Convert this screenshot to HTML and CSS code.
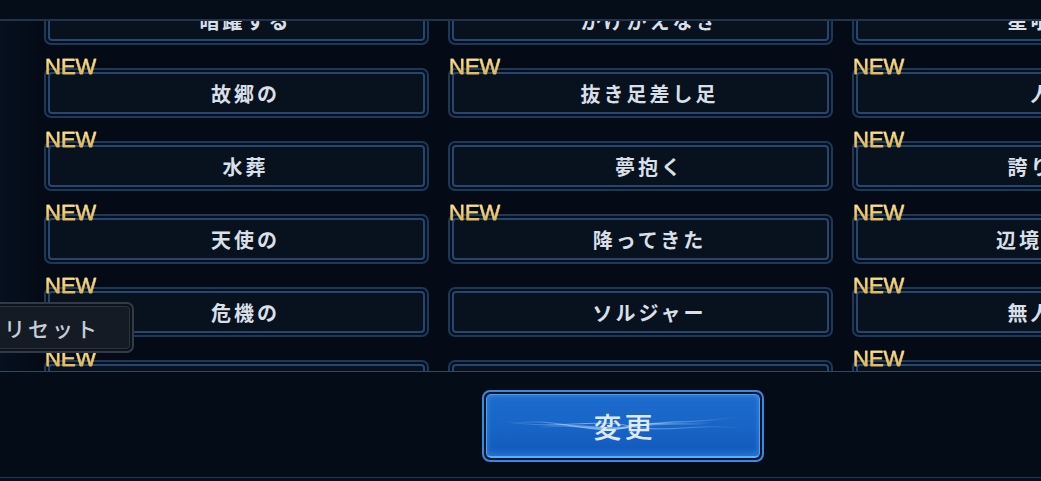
FILE: index.html
```html
<!DOCTYPE html>
<html lang="ja">
<head>
<meta charset="utf-8">
<title>称号変更</title>
<link rel="stylesheet" href="styles.css">
</head>
<body>
<div class="screen">
  <div class="header"></div>
  <div class="list">
    <div class="grid">
      <div class="cell"><div class="btn"><div class="btn-in">暗躍する</div></div></div>
      <div class="cell"><div class="btn"><div class="btn-in">かけがえなき</div></div></div>
      <div class="cell"><div class="btn"><div class="btn-in">星喰らう</div></div></div>

      <div class="cell"><span class="new">NEW</span><div class="btn"><div class="btn-in">故郷の</div></div></div>
      <div class="cell"><span class="new">NEW</span><div class="btn"><div class="btn-in">抜き足差し足</div></div></div>
      <div class="cell"><span class="new">NEW</span><div class="btn"><div class="btn-in">人形</div></div></div>

      <div class="cell"><span class="new">NEW</span><div class="btn"><div class="btn-in">水葬</div></div></div>
      <div class="cell"><div class="btn"><div class="btn-in">夢抱く</div></div></div>
      <div class="cell"><span class="new">NEW</span><div class="btn"><div class="btn-in">誇り高き</div></div></div>

      <div class="cell"><span class="new">NEW</span><div class="btn"><div class="btn-in">天使の</div></div></div>
      <div class="cell"><span class="new">NEW</span><div class="btn"><div class="btn-in">降ってきた</div></div></div>
      <div class="cell"><span class="new">NEW</span><div class="btn"><div class="btn-in">辺境の守護</div></div></div>

      <div class="cell"><span class="new">NEW</span><div class="btn"><div class="btn-in">危機の</div></div></div>
      <div class="cell"><div class="btn"><div class="btn-in">ソルジャー</div></div></div>
      <div class="cell"><span class="new">NEW</span><div class="btn"><div class="btn-in">無人の島</div></div></div>

      <div class="cell"><span class="new">NEW</span><div class="btn"><div class="btn-in">漂流する</div></div></div>
      <div class="cell"><div class="btn"><div class="btn-in">見習い</div></div></div>
      <div class="cell"><span class="new">NEW</span><div class="btn"><div class="btn-in">永遠の</div></div></div>
    </div>
    <div class="reset"><div class="reset-in">リセット</div></div>
  </div>
  <div class="footer">
    <div class="change">
      <div class="change-in">
        <svg class="swoosh" viewBox="0 0 272 62" preserveAspectRatio="none" aria-hidden="true">
          <defs>
            <linearGradient id="fade" x1="0" x2="1" y1="0" y2="0">
              <stop offset="0" stop-color="#cfe8ff" stop-opacity="0"/>
              <stop offset="0.35" stop-color="#cfe8ff" stop-opacity="0.55"/>
              <stop offset="0.6" stop-color="#cfe8ff" stop-opacity="0.5"/>
              <stop offset="1" stop-color="#cfe8ff" stop-opacity="0"/>
            </linearGradient>
          </defs>
          <path d="M20 30 C70 20 100 42 140 33 C180 24 210 30 250 22" fill="none" stroke="url(#fade)" stroke-width="1.2"/>
          <path d="M15 26 C60 36 110 24 140 31 C175 40 215 28 255 34" fill="none" stroke="url(#fade)" stroke-width="1"/>
          <path d="M50 33 C90 27 115 38 145 32 C170 27 195 31 225 28" fill="none" stroke="url(#fade)" stroke-width="2.2"/>
        </svg>
        <span class="change-label">変更</span>
      </div>
    </div>
  </div>
  <div class="strip"></div>
</div>
</body>
</html>
```

FILE: styles.css
```css
html, body {
  margin: 0;
  padding: 0;
}
body {
  width: 1041px;
  height: 481px;
  overflow: hidden;
  background: #040b16;
  font-family: "Noto Sans CJK JP", "Noto Sans", sans-serif;
}
.screen {
  display: flex;
  flex-direction: column;
  height: 481px;
}
.header {
  height: 19px;
  flex: none;
  background: #050d19;
  border-bottom: 2px solid #22344b;
  position: relative;
  z-index: 2;
}
.list {
  position: relative;
  height: 350px;
  flex: none;
  overflow: hidden;
  background: linear-gradient(90deg, #06101e 0, #040b16 40px, #040b16 100%);
}
.grid {
  display: grid;
  grid-template-columns: repeat(3, 385px);
  grid-auto-rows: 50px;
  column-gap: 19px;
  row-gap: 23px;
  margin-top: -26px;
  padding-left: 44px;
}
.cell {
  position: relative;
}
.btn {
  box-sizing: border-box;
  height: 50px;
  border: 2px solid #1e3858;
  border-radius: 7px;
  padding: 2px;
  background: #060f1c;
}
.btn-in {
  box-sizing: border-box;
  height: 100%;
  border: 2px solid #27466f;
  border-radius: 4px;
  background: #08121f;
  display: flex;
  align-items: center;
  justify-content: center;
  padding-left: 18px;
  color: #d9dfe7;
  font-size: 20px;
  font-weight: 700;
  letter-spacing: 3px;
  white-space: nowrap;
}
.new {
  position: absolute;
  left: 1px;
  top: -12px;
  z-index: 1;
  font-family: "Liberation Sans", Arial, sans-serif;
  font-size: 22px;
  line-height: 22px;
  -webkit-text-stroke: 0.4px #f0d27a;
  background: linear-gradient(180deg, #fdeeb0 0%, #efce70 50%, #cf9f3c 100%);
  -webkit-background-clip: text;
  background-clip: text;
  color: transparent;
}
.reset {
  position: absolute;
  left: -30px;
  top: 281px;
  box-sizing: border-box;
  width: 164px;
  height: 51px;
  border: 2px solid #323a46;
  border-radius: 7px;
  padding: 2px;
  background: #0d131b;
  z-index: 3;
}
.reset-in {
  box-sizing: border-box;
  height: 100%;
  border: 1px solid #2a323d;
  border-radius: 4px;
  background: #141b24;
  display: flex;
  align-items: center;
  padding-left: 29px;
  color: #c4ccd8;
  font-size: 21px;
  font-weight: 500;
  letter-spacing: 3px;
}
.footer {
  flex: none;
  height: 106px;
  box-sizing: border-box;
  border-top: 1px solid #38465a;
  background: #040c18;
  padding-top: 18px;
  padding-left: 482px;
}
.change {
  box-sizing: border-box;
  width: 282px;
  height: 72px;
  border: 2px solid #3d88dc;
  border-radius: 8px;
  padding: 2px;
  background: #06152a;
}
.change-in {
  position: relative;
  box-sizing: border-box;
  height: 100%;
  border: 1px solid #4f9ded;
  border-bottom: 2px solid #56b2ff;
  border-radius: 5px;
  background: linear-gradient(180deg, #1c6ccd 0%, #1764c6 55%, #1159ba 100%);
  display: flex;
  align-items: center;
  justify-content: center;
  overflow: hidden;
  box-shadow: inset 0 -3px 6px rgba(80, 180, 255, 0.35), inset 0 2px 4px rgba(120, 190, 255, 0.2);
}
.swoosh {
  position: absolute;
  left: 0;
  top: 0;
  width: 100%;
  height: 100%;
}
.change-label {
  position: relative;
  color: #dfe9f6;
  font-size: 28px;
  font-weight: 500;
  letter-spacing: 3px;
  padding-left: 3px;
}
.strip {
  flex: 1;
  background: linear-gradient(180deg, #1b3560 0, #1b3560 1px, #0b1018 1px);
}
```
